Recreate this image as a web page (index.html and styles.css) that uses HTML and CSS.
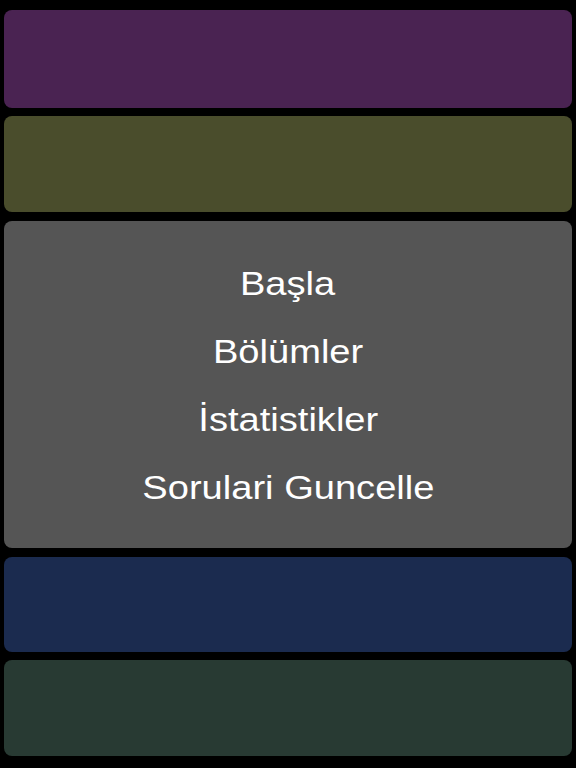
FILE: index.html
```html
<!DOCTYPE html>
<html lang="tr">
<head>
<meta charset="utf-8">
<title>Menu</title>
<link rel="stylesheet" href="styles.css">
</head>
<body>
<main class="screen">
  <div class="panel panel-purple"></div>
  <div class="panel panel-olive"></div>
  <nav class="panel panel-menu">
    <a class="menu-item" href="#">Başla</a>
    <a class="menu-item" href="#">Bölümler</a>
    <a class="menu-item" href="#">İstatistikler</a>
    <a class="menu-item" href="#">Sorulari Guncelle</a>
  </nav>
  <div class="panel panel-navy"></div>
  <div class="panel panel-green"></div>
</main>
</body>
</html>
```

FILE: styles.css
```css
html, body {
  margin: 0;
  padding: 0;
  background: #000;
}
body {
  width: 576px;
  height: 768px;
  overflow: hidden;
  font-family: "Liberation Sans", Arial, sans-serif;
}
.screen {
  display: flex;
  flex-direction: column;
  padding: 10px 4px 12px 4px;
  box-sizing: border-box;
  height: 768px;
}
.panel {
  border-radius: 8px;
  flex: none;
}
.panel-purple { height: 98px; background: #4a2352; }
.panel-olive { height: 96px; margin-top: 8px; background: #4a4d2c; }
.panel-menu {
  height: 327px;
  margin-top: 9px;
  background: #555555;
  display: flex;
  flex-direction: column;
  align-items: center;
  justify-content: center;
}
.panel-navy { height: 95px; margin-top: 9px; background: #1b2b4f; }
.panel-green { height: 96px; margin-top: 8px; background: #283a33; }
.menu-item {
  color: #fff;
  text-decoration: none;
  font-size: 34px;
  line-height: 68px;
  transform: scaleX(1.12);
}
```
